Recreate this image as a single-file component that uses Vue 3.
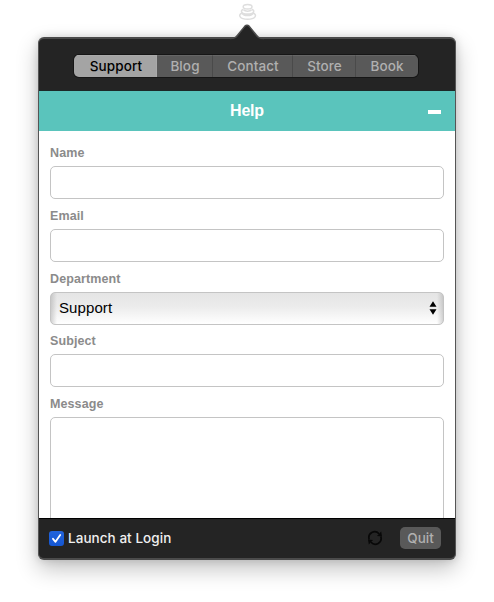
<script setup>
import { ref } from 'vue'

const tabs = [
  { name: 'Support', width: 83 },
  { name: 'Blog', width: 56 },
  { name: 'Contact', width: 80 },
  { name: 'Store', width: 63 },
  { name: 'Book', width: 62 },
]
const active = ref('Support')
const launch = ref(true)
</script>

<template>
  <main class="desktop">
    <svg class="tray" width="20" height="18" viewBox="0 0 20 18">
      <ellipse cx="9.6" cy="3.8" rx="4.4" ry="2.3" />
      <path d="M5.3 6.2C2.2 7.4 2.8 11 9.6 11S17 7.4 13.9 6.2M5.6 6.8C7 8.6 12.2 8.6 13.6 6.8M3.8 10C-.2 12 1.6 16.2 9.6 16.2S19.4 12 15.4 10M4.4 10.6C5.8 13.2 13.4 13.2 14.8 10.6" />
    </svg>
    <section class="popover">
      <svg class="arrow" width="34" height="17" viewBox="0 0 34 17">
        <path class="fill" d="M0 17V14.5C5 14.5 6.5 13 9 9.5L14.7 2.4Q17 .2 19.3 2.4L25 9.5C27.5 13 29 14.5 34 14.5V17Z" />
        <path class="edge" d="M0 14.5C5 14.5 6.5 13 9 9.5L14.7 2.4Q17 .2 19.3 2.4L25 9.5C27.5 13 29 14.5 34 14.5" />
      </svg>
      <header class="toolbar">
        <nav class="tabs">
          <button
            v-for="tab in tabs"
            :key="tab.name"
            class="tab"
            :class="{ selected: active === tab.name }"
            :style="{ width: tab.width + 'px' }"
            @click="active = tab.name"
          >{{ tab.name }}</button>
        </nav>
      </header>
      <div class="titlebar">
        <span></span>
        <h1>Help</h1>
        <span class="minus"></span>
      </div>
      <form class="form" @submit.prevent>
        <label class="field"><span>Name</span><input type="text" /></label>
        <label class="field"><span>Email</span><input type="text" /></label>
        <div class="field">
          <span>Department</span>
          <div class="select">
            <b>Support</b>
            <svg width="8" height="14" viewBox="0 0 8 14"><path d="M4 .3 7.5 5.8H.5ZM4 13.7.5 8.2h7Z" /></svg>
          </div>
        </div>
        <label class="field"><span>Subject</span><input type="text" /></label>
        <label class="field"><span>Message</span><textarea></textarea></label>
      </form>
      <footer class="footer">
        <label class="launch">
          <input v-model="launch" type="checkbox" />
          <i class="check"><svg v-if="launch" width="15" height="15" viewBox="0 0 15 15"><path d="M4 7.8 6.5 10.8 11.2 4" /></svg></i>
          <span>Launch at Login</span>
        </label>
        <svg class="refresh" width="16" height="16" viewBox="0 0 16 16">
          <path class="ring" d="M2.2 9.4A5.8 5.8 0 0 1 12 3.7M13.8 6.6A5.8 5.8 0 0 1 4 12.3" />
          <path d="M10 6 15 6.6 14.2 1.6ZM6 10 1 9.4 1.8 14.4Z" />
        </svg>
        <button class="quit">Quit</button>
      </footer>
    </section>
  </main>
</template>

<style>
body {
  background: #fff;
}
</style>

<style scoped>
* {
  box-sizing: border-box;
}
.desktop {
  position: relative;
  width: 494px;
  height: 602px;
  padding: 37px 0 0 38px;
  overflow: hidden;
  background: #fff;
  font-family: Inter, sans-serif;
}
.tray {
  position: absolute;
  left: 238px;
  top: 3px;
  fill: none;
  stroke: #dedede;
  stroke-width: 1.5;
}
.popover {
  position: relative;
  display: flex;
  flex-direction: column;
  width: 418px;
  height: 523px;
  border: 1px solid #555;
  border-top: 2px solid #4b4b4b;
  border-bottom: 2px solid #4b4b4b;
  border-radius: 6px;
  background: #242424;
  box-shadow: 0 9px 22px rgba(0, 0, 0, 0.24), 0 0 8px rgba(0, 0, 0, 0.14);
}
.arrow {
  position: absolute;
  left: 191px;
  top: -15px;
}
.fill {
  fill: #242424;
}
.edge {
  fill: none;
  stroke: #4b4b4b;
  stroke-width: 1.5;
}
.toolbar {
  height: 52px;
  flex: none;
  padding: 16px 0 0 35px;
  border-bottom: 1px solid #1c2827;
}
button {
  font-family: inherit;
  margin: 0;
  padding: 0;
  border: 0;
}
.tabs {
  display: flex;
  width: 344px;
  height: 22px;
  border-radius: 5px;
  box-shadow: 0 0 0 1px #161616;
  overflow: hidden;
}
.tab {
  padding-left: 1px;
  background: #595959;
  border-top: 1px solid #666;
  border-right: 1px solid #4a4a4a;
  color: #b0b0b0;
  font-size: 13.5px;
  font-weight: 500;
  letter-spacing: 0.1px;
  line-height: 21px;
}
.tab:last-child {
  padding-left: 0;
  border-right: 0;
}
.tab.selected {
  padding-left: 2px;
  background: #a4a4a4;
  border-color: #aaa;
  color: #000;
}
.titlebar {
  flex: none;
  display: grid;
  grid-template-columns: 40px 1fr 40px;
  align-items: center;
  height: 40px;
  background: #5ac4bc;
}
h1 {
  margin: 0;
  color: #fff;
  font: bold 16px/40px "Liberation Sans", Arial, sans-serif;
  letter-spacing: -0.2px;
  text-align: center;
}
.minus {
  width: 13px;
  height: 4px;
  margin: 2px 0 0 13px;
  background: #fff;
}
.form {
  height: 387px;
  flex: none;
  padding: 15px 11px 0;
  overflow: hidden;
  background: #fff;
  font-family: "Liberation Sans", Arial, sans-serif;
}
.field {
  display: block;
  height: 62.75px;
}
.field > span {
  display: block;
  height: 20px;
  color: #8b8b8b;
  font-size: 12.5px;
  font-weight: bold;
  letter-spacing: 0.1px;
  line-height: 15px;
}
.field input,
.field textarea,
.select {
  display: block;
  width: 394px;
  height: 33px;
  margin: 0;
  padding: 0 9px;
  border: 1px solid #c4c4c4;
  border-radius: 5px;
  outline: 0;
  background: #fff;
  font: 15px "Liberation Sans", Arial, sans-serif;
}
.field textarea {
  height: 130px;
  resize: none;
}
.select {
  display: flex;
  align-items: center;
  justify-content: space-between;
  padding: 0 6px 1px 8px;
  background: linear-gradient(to right, rgba(170, 170, 170, 0.5), transparent 6px calc(100% - 6px), rgba(170, 170, 170, 0.5)), linear-gradient(#e5e5e5, #ececec 45%, #fff);
}
.select b {
  font-weight: normal;
  letter-spacing: 0.1px;
}
.footer {
  display: flex;
  align-items: center;
  height: 39px;
  padding: 0 14px 0 10px;
  border-top: 1px solid #000;
}
.launch {
  display: flex;
  align-items: center;
  gap: 4px;
  color: #f0f0f0;
  font-size: 13.5px;
  font-weight: 500;
  letter-spacing: 0.05px;
  line-height: 20px;
}
.launch input {
  position: absolute;
  opacity: 0;
}
.check {
  width: 15px;
  height: 15px;
  border-radius: 3px;
  background: linear-gradient(#2264dc, #1456d2);
}
.check svg {
  display: block;
  fill: none;
  stroke: #fff;
  stroke-width: 1.8;
  stroke-linecap: round;
  stroke-linejoin: round;
}
.refresh {
  margin-left: auto;
  fill: #080808;
}
.ring {
  fill: none;
  stroke: #080808;
  stroke-width: 1.7;
}
.quit {
  width: 41px;
  height: 22px;
  margin-left: 17px;
  border-radius: 5px;
  background: #595959;
  color: #b0b0b0;
  font-size: 13.5px;
  font-weight: 500;
  line-height: 22px;
}
</style>
